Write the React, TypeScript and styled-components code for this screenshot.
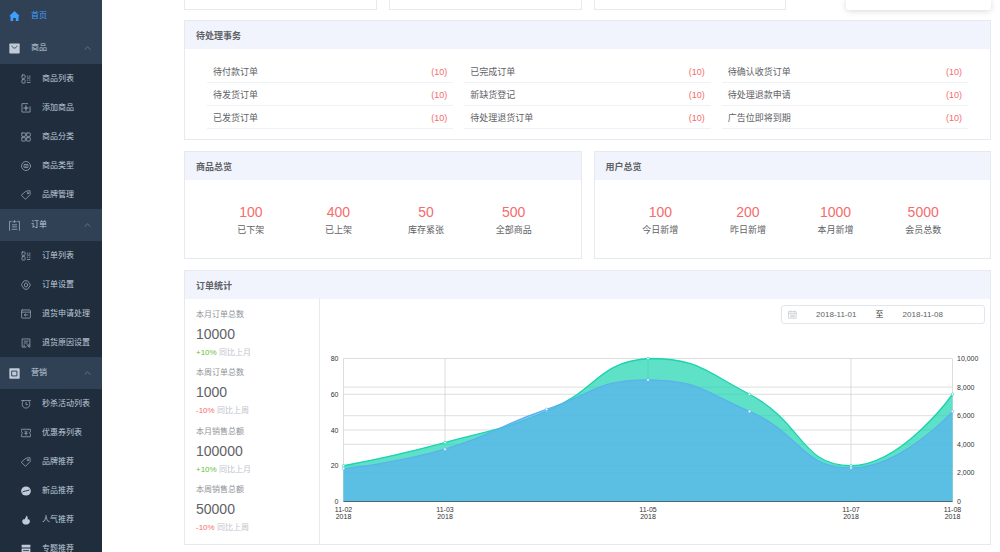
import React from 'react';
import styled, { createGlobalStyle } from 'styled-components';

const color = {
  menu: '#304156',
  submenu: '#1f2d3d',
  menuText: '#bfcbd9',
  primary: '#409eff',
  danger: '#f56c6c',
  success: '#67c23a',
  text: '#606266',
  secondary: '#909399',
  placeholder: '#c0c4cc',
  border: '#e6e9f0',
  line: '#eff1f5',
  head: '#f1f4fc',
};

const GlobalStyle = createGlobalStyle`
  *, *::before, *::after { box-sizing: border-box; }
  body {
    margin: 0;
    background: #fff;
    color: ${color.text};
    font-family: "Liberation Sans", "Noto Sans CJK SC", sans-serif;
    font-size: 9px;
    line-height: 14px;
  }
  h2, p, ul, dl, dd { margin: 0; padding: 0; }
  ul { list-style: none; }
`;

const Shell = styled.div`
  display: flex;
  height: 100vh;
  overflow: hidden;
`;

/* ---------- sidebar ---------- */

const Sidebar = styled.nav`
  flex: 0 0 102px;
  background: ${color.submenu};
  color: ${color.menuText};
  font-size: 8px;
`;

const HomeLink = styled.a`
  display: flex;
  align-items: center;
  gap: 11px;
  height: 32px;
  padding: 0 9px;
  background: ${color.menu};
  color: ${color.primary};
  text-decoration: none;
`;

const GroupButton = styled.button`
  display: flex;
  align-items: center;
  gap: 11px;
  width: 100%;
  height: 32px;
  padding: 0 9px;
  border: 0;
  background: ${color.menu};
  color: inherit;
  font: inherit;
  text-align: left;
  cursor: pointer;
`;

const GroupLabel = styled.span`
  flex: 1;
`;

const SubLink = styled.a`
  display: flex;
  align-items: center;
  gap: 11px;
  height: 29px;
  padding-left: 21px;
  color: inherit;
  text-decoration: none;
  white-space: nowrap;
`;

const Glyph = styled.svg<{ $size: number; $dim?: boolean }>`
  flex: none;
  width: ${(p) => p.$size}px;
  height: ${(p) => p.$size}px;
  fill: none;
  stroke: currentColor;
  stroke-width: 1.3;
  stroke-linecap: round;
  stroke-linejoin: round;
  opacity: ${(p) => (p.$dim ? 0.75 : 1)};
`;

const Chevron = styled(Glyph)`
  margin-right: 2px;
  opacity: 0.4;
`;

type IconName =
  | 'home' | 'product' | 'list' | 'add' | 'grid' | 'type' | 'tag' | 'order'
  | 'gear' | 'refund' | 'reason' | 'market' | 'clock' | 'coupon' | 'new' | 'hot' | 'subject';

const solidIcons: IconName[] = ['home', 'product', 'market', 'new', 'hot', 'subject'];

const icons: Record<IconName, React.ReactNode> = {
  home: <path d="M8 0 15.8 7.600h-2v7H9.900V10.200H6.100v4.400H2.200v-7h-2z" fill="currentColor" stroke="none" />,
  product: (
    <>
      <rect x=".5" y=".8" width="15" height="14.400" rx="1" fill="currentColor" stroke="none" />
      <path d="M4.500 4.500c.5 4 6.500 4 7 0" stroke={color.menu} strokeWidth="1.300" />
    </>
  ),
  list: (
    <>
      <rect x="1.500" y="1.500" width="5" height="5.500" rx="1" />
      <rect x="1.500" y="9" width="5" height="5.500" rx="1" />
      <path d="M10 3.500h1M13.500 3.500h1M10 6.500h4.500M10 9.800h1M13.500 9.800h1M10 13.500h4.500" />
    </>
  ),
  add: (
    <>
      <path d="M10.500 1H1.500v13.500h13V6" />
      <path d="M8 4.500v7M4.500 8h7" strokeWidth="1.800" />
    </>
  ),
  grid: (
    <>
      <rect x="1.200" y="1.500" width="5.800" height="5.500" rx=".6" />
      <rect x="9" y="1.500" width="5.800" height="5.500" rx=".6" />
      <rect x="1.200" y="9" width="5.800" height="5.500" rx=".6" />
      <rect x="9" y="9" width="5.800" height="5.500" rx=".6" />
    </>
  ),
  type: (
    <>
      <circle cx="8" cy="8" r="7.200" />
      <path d="M5 5.500h6M4 8h8M5 10.500h6" />
    </>
  ),
  tag: (
    <>
      <path d="M8.500 1.800 14.300 1l.5 6-7.600 8L.9 8.700z" />
      <circle cx="11" cy="5" r="1.100" />
    </>
  ),
  order: (
    <path
      d="M3.200 2H.8v13M12.800 2h2.400v13M5.500 2.500h5M8 .8v2.400M5 7h6M5 10h6M4.500 13.500h7"
      strokeWidth="1.200"
    />
  ),
  gear: (
    <>
      <path d="M5.500 1.300h5L15.200 8l-4.700 6.700h-5L.8 8z" />
      <ellipse cx="8" cy="8" rx="2.600" ry="3.200" />
    </>
  ),
  refund: (
    <>
      <rect x="1" y="1.500" width="14" height="13" rx="1" />
      <path d="M1 5h14M11 9.500H5.500M7.500 7.800 5.500 9.500l2 1.700" />
    </>
  ),
  reason: (
    <>
      <path d="M8 14.500H1.800v-13h12.400v13M5 5h6M5 8h5" />
      <path d="M5 11v3M9.500 10.500l3 4M12.500 10.500v3" />
    </>
  ),
  market: (
    <>
      <rect x=".5" y=".5" width="15" height="15" rx="1" fill="currentColor" stroke="none" />
      <rect x="4.500" y="4.500" width="7" height="7" stroke={color.menu} strokeWidth="1.400" />
    </>
  ),
  clock: (
    <>
      <path d="M4 2.500h8c1.500 1.500 2 3.500 2 6 0 3.500-2.500 6-6 6s-6-2.500-6-6c0-2.500.5-4.500 2-6z" />
      <path d="M8 5.500v3.500h2.500M.8 2.500h2.700M12.500 2.500h2.700" />
    </>
  ),
  coupon: (
    <>
      <path d="M1 2h14v4c-1.500 0-1.500 4 0 4v4H1v-4c1.500 0 1.500-4 0-4z" />
      <path d="M6 4.800 8 6.800l2-2M8 7v4.500M6 8.500h4" />
    </>
  ),
  new: (
    <>
      <ellipse cx="8" cy="8" rx="7.800" ry="7.200" fill="currentColor" stroke="none" />
      <path d="M3 9.500c3-2.500 4.500-.5 10-3" stroke={color.submenu} strokeWidth="1.500" />
    </>
  ),
  hot: (
    <path
      d="M8.800.8c-.3 2.500-2.300 3.500-2.600 6-.8-.2-1.400-.2-2.200 0-1.500.7-2 2-2 3.500 0 3.200 2.700 5 6 5s6.200-1.800 6.200-5c0-1.800-.8-3-1.800-3.500-.6.4-1.200.4-1.700.2.3-2.500-.2-4.800-1.900-6.200z"
      fill="currentColor"
      stroke="none"
    />
  ),
  subject: (
    <>
      <path d="M1 1h14v4.500H1zM1 7h14v8H1z" fill="currentColor" stroke="none" />
      <path d="M4 10.500h8" stroke={color.submenu} />
    </>
  ),
};

const Icon = ({ name, size }: { name: IconName; size: number }) => (
  <Glyph $size={size} $dim={!solidIcons.includes(name)} viewBox="0 0 16 16" aria-hidden="true">
    {icons[name]}
  </Glyph>
);

const menu: { icon: IconName; label: string; items: [IconName, string][] }[] = [
  {
    icon: 'product',
    label: '商品',
    items: [['list', '商品列表'], ['add', '添加商品'], ['grid', '商品分类'], ['type', '商品类型'], ['tag', '品牌管理']],
  },
  {
    icon: 'order',
    label: '订单',
    items: [['list', '订单列表'], ['gear', '订单设置'], ['refund', '退货申请处理'], ['reason', '退货原因设置']],
  },
  {
    icon: 'market',
    label: '营销',
    items: [['clock', '秒杀活动列表'], ['coupon', '优惠券列表'], ['tag', '品牌推荐'], ['new', '新品推荐'], ['hot', '人气推荐'], ['subject', '专题推荐']],
  },
];

/* ---------- content ---------- */

const Main = styled.main`
  flex: 1;
  min-width: 0;
  display: flex;
  flex-direction: column;
  gap: 11px;
  padding: 0 9px 0 82px;
`;

const SummaryRow = styled.div`
  display: grid;
  grid-template-columns: repeat(4, 1fr);
  gap: 12px;
  flex: none;
  height: 9px;
`;

const SummaryCard = styled.div`
  border: 1px solid ${color.border};
  border-top: 0;
`;

const PromoCard = styled.div`
  justify-self: end;
  width: 75%;
  height: 10px;
  border-radius: 0 0 3px 3px;
  background: #fff;
  box-shadow: 0 1px 6px rgba(0, 0, 0, 0.16);
`;

const Panel = styled.section`
  flex: none;
  border: 1px solid ${color.border};
`;

const PanelTitle = styled.h2`
  padding: 8px 11px 6px;
  background: ${color.head};
  font-size: 9px;
  line-height: 14px;
  font-weight: 700;
`;

const TaskGrid = styled.ul`
  display: grid;
  grid-template-columns: repeat(3, 1fr);
  column-gap: 11px;
  padding: 11px 22px 10px;
`;

const Task = styled.li`
  display: flex;
  justify-content: space-between;
  padding: 5px 6px 3px;
  border-bottom: 1px solid ${color.line};
`;

const Count = styled.span`
  color: ${color.danger};
`;

const OverviewRow = styled.div`
  display: grid;
  grid-template-columns: repeat(2, 1fr);
  gap: 12px;
  flex: none;
`;

const Overview = styled.dl`
  display: grid;
  grid-template-columns: repeat(4, 1fr);
  padding: 22px 23px 20px 22px;
  text-align: center;
`;

const OverviewItem = styled.div`
  display: flex;
  flex-direction: column-reverse;
`;

const OverviewValue = styled.dd`
  color: ${color.danger};
  font-size: 14px;
  line-height: 20px;
`;

const OverviewLabel = styled.dt`
  line-height: 16px;
`;

const OrderBody = styled.div`
  display: flex;
`;

const Totals = styled.div`
  flex: 0 0 135px;
  display: flex;
  flex-direction: column;
  justify-content: space-between;
  padding: 9px 11px;
  border-right: 1px solid ${color.border};
`;

const TotalLabel = styled.p`
  color: ${color.secondary};
  font-size: 8px;
`;

const TotalValue = styled.p`
  font-size: 14px;
  line-height: 24px;
`;

const TotalTrend = styled.p<{ $up: boolean }>`
  color: ${color.placeholder};
  font-size: 8px;

  span { color: ${(p) => (p.$up ? color.success : color.danger)}; }
`;

const ChartArea = styled.div`
  flex: 1;
  min-width: 0;
  display: flex;
  flex-direction: column;
`;

const DateRange = styled.div`
  align-self: flex-end;
  display: flex;
  align-items: center;
  width: 204px;
  height: 19px;
  margin: 6px 5px 0 0;
  padding: 0 22px 0 6px;
  border: 1px solid #e2e5ec;
  border-radius: 3px;
  font-size: 8px;
  color: ${color.placeholder};
`;

const DateInput = styled.input`
  flex: 1;
  min-width: 0;
  padding: 0;
  border: 0;
  outline: 0;
  background: none;
  color: ${color.text};
  font: inherit;
  text-align: center;
`;

const RangeSeparator = styled.span`
  color: #303133;
`;

const Chart = styled.svg`
  display: block;
  width: 100%;
  height: auto;
  font-size: 7px;
  fill: #333;
`;

/* ---------- chart ---------- */

const plot = { left: 23.5, right: 632.5, top: 34.5, bottom: 177.5 };
const step = (plot.right - plot.left) / 6;
const xAt = (i: number) => plot.left + i * step;
const yAt = (ratio: number) => plot.bottom - ratio * (plot.bottom - plot.top);

type Point = [number, number];

const toPoints = (values: number[], max: number): Point[] =>
  values.map((v, i) => [xAt(i), yAt(v / max)]);

const orderCount = toPoints([20, 33, 50.5, 80, 60, 20, 60], 80);
const orderAmount = toPoints([2300, 3660, 6450, 8500, 6300, 2350, 6300], 10000);

const clamp = (v: number, lo: number, hi: number) => Math.min(hi, Math.max(lo, v));

/* Smooth line whose control points stay inside the series' own bounds. */
function smoothPath(points: Point[]) {
  const ys = points.map((p) => p[1]);
  const lo = Math.min(...ys);
  const hi = Math.max(...ys);
  const smooth = 0.5;
  let c0 = points[0];
  let d = `M${points[0].join(' ')}`;
  for (let i = 1; i < points.length; i++) {
    const p = points[i];
    const prev = points[i - 1];
    const next = points[i + 1];
    let c1: Point = p;
    let after: Point = p;
    if (next) {
      const lenPrev = Math.hypot(p[0] - prev[0], p[1] - prev[1]);
      const lenNext = Math.hypot(next[0] - p[0], next[1] - p[1]);
      const r = lenNext / (lenPrev + lenNext);
      const v = [next[0] - prev[0], next[1] - prev[1]];
      c1 = [p[0] - v[0] * smooth * (1 - r), clamp(p[1] - v[1] * smooth * (1 - r), lo, hi)];
      after = [p[0] + v[0] * smooth * r, clamp(p[1] + v[1] * smooth * r, lo, hi)];
    }
    d += `C${c0.join(' ')} ${c1.join(' ')} ${p.join(' ')}`;
    c0 = after;
  }
  return d;
}

const Series = ({ points, stroke }: { points: Point[]; stroke: string }) => {
  const d = smoothPath(points);
  return (
    <g>
      <path d={`${d}L${plot.right} ${plot.bottom}L${plot.left} ${plot.bottom}Z`} fill={stroke} fillOpacity={0.7} />
      <path d={d} fill="none" stroke={stroke} strokeWidth={1.3} />
      {points.map(([x, y]) => (
        <circle key={x} cx={x} cy={y} r={1.3} fill="#fff" stroke={stroke} strokeWidth={0.6} />
      ))}
    </g>
  );
};

const dates: [number, string][] = [[0, '11-02'], [1, '11-03'], [3, '11-05'], [5, '11-07'], [6, '11-08']];

const OrderChart = () => (
  <Chart viewBox="0 0 670 220" role="img" aria-label="订单统计">
    <g stroke="#d4d4d4" strokeWidth={0.8}>
      {[1, 2, 3, 4].map((n) => (
        <line key={`l${n}`} x1={plot.left} x2={plot.right} y1={yAt(n / 4)} y2={yAt(n / 4)} />
      ))}
      {[1, 2, 3, 4].map((n) => (
        <line key={`r${n}`} x1={plot.left} x2={plot.right} y1={yAt(n / 5)} y2={yAt(n / 5)} />
      ))}
      {dates.map(([i]) => (
        <line key={i} x1={xAt(i)} x2={xAt(i)} y1={plot.top} y2={plot.bottom} />
      ))}
    </g>
    <Series points={orderCount} stroke="#19d4ae" />
    <Series points={orderAmount} stroke="#5ab1ef" />
    <line x1={plot.left} x2={plot.right} y1={plot.bottom} y2={plot.bottom} stroke="#4d6873" />
    <g textAnchor="end">
      {[0, 20, 40, 60, 80].map((v) => (
        <text key={v} x={18.5} y={yAt(v / 80) + 2.5}>{v}</text>
      ))}
    </g>
    {[0, 2000, 4000, 6000, 8000, 10000].map((v) => (
      <text key={v} x={637} y={yAt(v / 10000) + 2.5}>{v.toLocaleString('en-US')}</text>
    ))}
    <g textAnchor="middle">
      {dates.map(([i, label]) => (
        <React.Fragment key={label}>
          <text x={xAt(i)} y={188}>{label}</text>
          <text x={xAt(i)} y={195}>2018</text>
        </React.Fragment>
      ))}
    </g>
  </Chart>
);

/* ---------- data ---------- */

const tasks = [
  '待付款订单', '已完成订单', '待确认收货订单',
  '待发货订单', '新缺货登记', '待处理退款申请',
  '已发货订单', '待处理退货订单', '广告位即将到期',
];

const overviews: { title: string; items: [string, string][] }[] = [
  { title: '商品总览', items: [['100', '已下架'], ['400', '已上架'], ['50', '库存紧张'], ['500', '全部商品']] },
  { title: '用户总览', items: [['100', '今日新增'], ['200', '昨日新增'], ['1000', '本月新增'], ['5000', '会员总数']] },
];

const totals = [
  { label: '本月订单总数', value: '10000', trend: '+10%', base: '同比上月' },
  { label: '本周订单总数', value: '1000', trend: '-10%', base: '同比上周' },
  { label: '本月销售总额', value: '100000', trend: '+10%', base: '同比上月' },
  { label: '本周销售总额', value: '50000', trend: '-10%', base: '同比上周' },
];

export default function App() {
  return (
    <>
      <GlobalStyle />
      <Shell>
        <Sidebar>
          <HomeLink href="#home">
            <Icon name="home" size={11} />
            首页
          </HomeLink>
          {menu.map((group) => (
            <div key={group.label}>
              <GroupButton type="button" aria-expanded="true">
                <Icon name={group.icon} size={11} />
                <GroupLabel>{group.label}</GroupLabel>
                <Chevron $size={7} viewBox="0 0 16 16" aria-hidden="true">
                  <path d="m2 10 6-6 6 6" strokeWidth="2" />
                </Chevron>
              </GroupButton>
              <ul>
                {group.items.map(([icon, label]) => (
                  <li key={label}>
                    <SubLink href="#item">
                      <Icon name={icon} size={10} />
                      {label}
                    </SubLink>
                  </li>
                ))}
              </ul>
            </div>
          ))}
        </Sidebar>

        <Main>
          <SummaryRow>
            <SummaryCard />
            <SummaryCard />
            <SummaryCard />
            <PromoCard />
          </SummaryRow>

          <Panel>
            <PanelTitle>待处理事务</PanelTitle>
            <TaskGrid>
              {tasks.map((name) => (
                <Task key={name}>
                  <span>{name}</span>
                  <Count>(10)</Count>
                </Task>
              ))}
            </TaskGrid>
          </Panel>

          <OverviewRow>
            {overviews.map((panel) => (
              <Panel key={panel.title}>
                <PanelTitle>{panel.title}</PanelTitle>
                <Overview>
                  {panel.items.map(([value, label]) => (
                    <OverviewItem key={label}>
                      <OverviewLabel>{label}</OverviewLabel>
                      <OverviewValue>{value}</OverviewValue>
                    </OverviewItem>
                  ))}
                </Overview>
              </Panel>
            ))}
          </OverviewRow>

          <Panel>
            <PanelTitle>订单统计</PanelTitle>
            <OrderBody>
              <Totals>
                {totals.map((t) => (
                  <div key={t.label}>
                    <TotalLabel>{t.label}</TotalLabel>
                    <TotalValue>{t.value}</TotalValue>
                    <TotalTrend $up={t.trend.startsWith('+')}>
                      <span>{t.trend}</span> {t.base}
                    </TotalTrend>
                  </div>
                ))}
              </Totals>
              <ChartArea>
                <DateRange>
                  <Glyph $size={9} viewBox="0 0 16 16" aria-hidden="true">
                    <path d="M1.500 3h13v11.500h-13zM1.500 6.500h13M5 1.500V4M11 1.500V4M4.500 9.500h7M4.500 12h7" />
                  </Glyph>
                  <DateInput aria-label="开始日期" defaultValue="2018-11-01" />
                  <RangeSeparator>至</RangeSeparator>
                  <DateInput aria-label="结束日期" defaultValue="2018-11-08" />
                </DateRange>
                <OrderChart />
              </ChartArea>
            </OrderBody>
          </Panel>
        </Main>
      </Shell>
    </>
  );
}
